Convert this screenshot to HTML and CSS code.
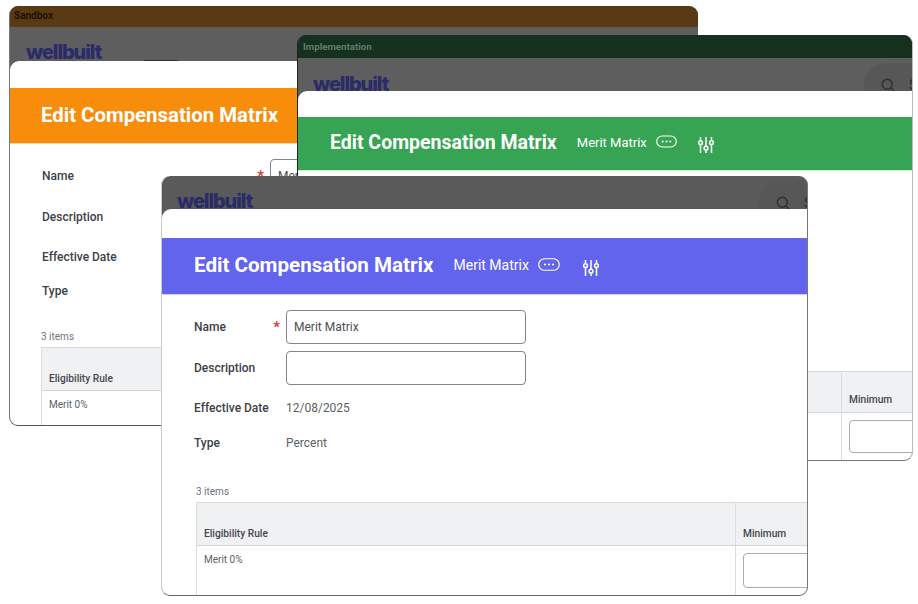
FILE: index.html
```html
<!DOCTYPE html>
<html lang="en">
<head>
  <meta charset="UTF-8">
  <title>Edit Compensation Matrix</title>
  <link rel="stylesheet" href="styles.css">
</head>
<body>

  <svg class="icon-defs" width="0" height="0">
    <symbol id="icon-more" viewBox="0 0 22 13">
      <rect x="0.75" y="0.75" width="20.5" height="11.5" rx="5.75" fill="none" stroke="currentColor" stroke-width="1.2"/>
      <circle cx="7" cy="6.5" r="1.1" fill="currentColor"/>
      <circle cx="11" cy="6.5" r="1.1" fill="currentColor"/>
      <circle cx="15" cy="6.5" r="1.1" fill="currentColor"/>
    </symbol>
    <symbol id="icon-sliders" viewBox="0 0 16 18">
      <g fill="none" stroke="currentColor" stroke-width="1.5">
        <path d="M2.5 1v3.5M2.5 9v8M8 1v9M8 14.5V17M13.5 1v3.5M13.5 9v8"/>
        <circle cx="2.5" cy="6.7" r="1.9"/>
        <circle cx="8" cy="12.2" r="1.9"/>
        <circle cx="13.5" cy="6.7" r="1.9"/>
      </g>
    </symbol>
    <symbol id="icon-search" viewBox="0 0 18 18">
      <circle cx="7.5" cy="7.5" r="6" fill="none" stroke="currentColor" stroke-width="1.6"/>
      <path d="M12 12l5 5" stroke="currentColor" stroke-width="1.6"/>
    </symbol>
  </svg>

  <!-- Sandbox -->
  <section class="window window-sandbox">
    <div class="envbar">Sandbox</div>
    <div class="topbar">
      <span class="logo">wellbuilt</span>
      <span class="topbar-tab"></span>
    </div>
    <div class="dialog">
      <div class="dialog-head">
        <h1>Edit Compensation Matrix</h1>
      </div>
      <div class="form">
        <div class="field">
          <span class="label">Name <i class="required">*</i></span>
          <input class="text-input" type="text" value="Merit Matrix">
        </div>
        <div class="field">
          <span class="label">Description</span>
          <input class="text-input" type="text">
        </div>
        <div class="field field-static">
          <span class="label">Effective Date</span>
          <span class="value">12/08/2025</span>
        </div>
        <div class="field field-static">
          <span class="label">Type</span>
          <span class="value">Percent</span>
        </div>
      </div>
      <div class="items">
        <p class="count">3 items</p>
        <table class="grid">
          <thead>
            <tr><th class="col-rule">Eligibility Rule</th><th class="col-min">Minimum</th></tr>
          </thead>
          <tbody>
            <tr><td>Merit 0%</td><td><input class="cell-input" type="text"></td></tr>
            <tr><td></td><td></td></tr>
          </tbody>
        </table>
      </div>
    </div>
  </section>

  <!-- Implementation -->
  <section class="window window-impl">
    <div class="envbar">Implementation</div>
    <div class="topbar">
      <span class="logo">wellbuilt</span>
      <div class="search">
        <svg class="search-icon"><use href="#icon-search"/></svg>
        <span class="search-text">Search</span>
      </div>
    </div>
    <div class="dialog">
      <div class="dialog-head">
        <h1>Edit Compensation Matrix</h1>
        <span class="subtitle">Merit Matrix</span>
        <svg class="icon-more"><use href="#icon-more"/></svg>
        <svg class="icon-sliders"><use href="#icon-sliders"/></svg>
      </div>
      <div class="form">
        <div class="field">
          <span class="label">Name <i class="required">*</i></span>
          <input class="text-input" type="text" value="Merit Matrix">
        </div>
        <div class="field">
          <span class="label">Description</span>
          <input class="text-input" type="text">
        </div>
        <div class="field field-static">
          <span class="label">Effective Date</span>
          <span class="value">12/08/2025</span>
        </div>
        <div class="field field-static">
          <span class="label">Type</span>
          <span class="value">Percent</span>
        </div>
      </div>
      <div class="items">
        <p class="count">3 items</p>
        <table class="grid">
          <thead>
            <tr><th class="col-rule">Eligibility Rule</th><th class="col-min">Minimum</th></tr>
          </thead>
          <tbody>
            <tr><td>Merit 0%</td><td><input class="cell-input" type="text"></td></tr>
            <tr><td></td><td></td></tr>
          </tbody>
        </table>
      </div>
    </div>
  </section>

  <!-- Production -->
  <section class="window window-prod">
    <div class="topbar">
      <span class="logo">wellbuilt</span>
      <div class="search">
        <svg class="search-icon"><use href="#icon-search"/></svg>
        <span class="search-text">Search</span>
      </div>
    </div>
    <div class="dialog">
      <div class="dialog-head">
        <h1>Edit Compensation Matrix</h1>
        <span class="subtitle">Merit Matrix</span>
        <svg class="icon-more"><use href="#icon-more"/></svg>
        <svg class="icon-sliders"><use href="#icon-sliders"/></svg>
      </div>
      <div class="form">
        <div class="field">
          <span class="label">Name <i class="required">*</i></span>
          <input class="text-input" type="text" value="Merit Matrix">
        </div>
        <div class="field">
          <span class="label">Description</span>
          <input class="text-input" type="text">
        </div>
        <div class="field field-static">
          <span class="label">Effective Date</span>
          <span class="value">12/08/2025</span>
        </div>
        <div class="field field-static">
          <span class="label">Type</span>
          <span class="value">Percent</span>
        </div>
      </div>
      <div class="items">
        <p class="count">3 items</p>
        <table class="grid">
          <thead>
            <tr><th class="col-rule">Eligibility Rule</th><th class="col-min">Minimum</th></tr>
          </thead>
          <tbody>
            <tr><td>Merit 0%</td><td><input class="cell-input" type="text"></td></tr>
            <tr><td></td><td></td></tr>
          </tbody>
        </table>
      </div>
    </div>
  </section>

</body>
</html>
```

FILE: styles.css
```css
html, body {
  margin: 0;
  height: 100%;
  background-color: #fff;
  overflow: hidden;
}

body {
  font-family: Roboto, "Liberation Sans", sans-serif;
  color: #333;
}

.icon-defs {
  position: absolute;
}

/* windows sit on a free canvas and overlap */
.window {
  position: absolute;
  box-sizing: border-box;
  overflow: hidden;
  background-color: #5e5e5e;
  border-radius: 9px;
}

.window-sandbox {
  left: 9px;
  top: 6px;
  width: 689px;
  height: 420px;
  border-bottom: 1px solid #555;
  border-left: 1px solid #777;
}

.window-impl {
  left: 297px;
  top: 35px;
  width: 616px;
  height: 426px;
  border-bottom: 1px solid #777;
  border-right: 1px solid #bbb;
  border-left: 1px solid #222;
}

.window-prod {
  left: 161px;
  top: 176px;
  width: 647px;
  height: 420px;
  background-color: #5a5a5a;
  border-bottom: 1px solid #666;
  border-right: 1px solid #777;
  border-left: 1px solid #ccc;
}

.envbar {
  padding-left: 4px;
  font-weight: 700;
}

.window-sandbox .envbar {
  height: 21px;
  line-height: 19px;
  font-size: 10px;
  background-color: #5a3a14;
  color: #1a1206;
}

.window-impl .envbar {
  height: 23px;
  line-height: 24px;
  padding-left: 5px;
  font-size: 9.7px;
  background-color: #14301f;
  color: #5f7d6b;
}

.topbar {
  display: flex;
  align-items: flex-start;
  overflow: hidden;
  padding-left: 15px;
}

.window-sandbox .topbar { height: 34px; padding-left: 16px; }
.window-impl .topbar { height: 33px; }
.window-prod .topbar { height: 33px; }

.logo {
  margin-top: 13px;
  font-family: Inter, Roboto, sans-serif;
  font-size: 20px;
  font-weight: 800;
  line-height: 24px;
  letter-spacing: -1.1px;
  color: #2b2b68;
}

.window-impl .logo {
  margin-top: 14px;
}

.topbar-tab {
  align-self: flex-end;
  width: 34px;
  height: 1px;
  margin-left: 43px;
  background-color: #333;
}

.search {
  display: flex;
  align-items: center;
  gap: 13px;
  width: 120px;
  height: 44px;
  margin-left: auto;
  margin-top: 5px;
  margin-right: -89px;
  padding-left: 17px;
  background-color: #575757;
  border-radius: 22px;
  color: #2e2e2e;
  flex-shrink: 0;
}

.search-icon {
  width: 15px;
  height: 15px;
  flex-shrink: 0;
}

.search-text {
  font-size: 14px;
}

.dialog {
  height: 100%;
  padding-top: 27px;
  background-color: #fff;
  border-radius: 9px 0 0 0;
}

.window-impl .dialog { padding-top: 26px; }
.window-prod .dialog { padding-top: 29px; }

.dialog-head {
  display: flex;
  align-items: center;
  box-sizing: border-box;
  height: 56px;
  padding: 0 0 2px 32px;
  color: #fff;
}

.window-sandbox .dialog-head {
  padding-left: 31px;
  background-color: #f78d0b;
  border-bottom: 1px solid #fbd9ae;
}

.window-impl .dialog-head {
  height: 54px;
  background-color: #36a452;
  border-bottom: 1px solid #c9ecd3;
}

.window-prod .dialog-head {
  height: 57px;
  background-color: #6264ee;
  border-bottom: 1px solid #cfd0fa;
}

h1 {
  margin: 0 20px 0 0;
  font-size: 20.6px;
  font-weight: 700;
  white-space: nowrap;
}

.window-sandbox h1 {
  font-size: 20.4px;
}

.window-impl h1 {
  font-size: 19.5px;
}

.subtitle {
  font-size: 14px;
  margin-right: 9px;
  white-space: nowrap;
}

.window-impl .subtitle {
  font-size: 13px;
}

.icon-more {
  width: 22px;
  height: 13px;
  margin-top: -2px;
  margin-right: 23px;
}

.window-impl .icon-more {
  width: 21px;
  margin-right: 21px;
}

.icon-sliders {
  width: 16px;
  height: 18px;
  margin-top: 5px;
}

.form {
  padding: 15px 0 0 32px;
}

.field {
  display: flex;
  align-items: center;
  height: 34px;
  margin-bottom: 7px;
}

.field-static {
  height: 20px;
  margin-top: 13px;
  margin-bottom: 0;
}

.field-static + .field-static {
  margin-top: 14px;
}

.window-prod .field-static + .field-static {
  margin-top: 15px;
}

.window-prod .count {
  margin-top: 33px;
}

.label {
  display: flex;
  justify-content: space-between;
  flex-shrink: 0;
  box-sizing: border-box;
  width: 92px;
  padding-right: 6px;
  font-size: 12px;
  font-weight: 500;
  color: #3d4148;
}

.window-sandbox .label,
.window-impl .label {
  width: 228px;
}

.required {
  font-style: normal;
  font-size: 15px;
  line-height: 14px;
  color: #d9302a;
}

.text-input {
  box-sizing: border-box;
  width: 240px;
  height: 34px;
  padding: 0 7px;
  border: 1px solid #80858c;
  border-radius: 4px;
  font-family: inherit;
  font-size: 12px;
  color: #4a4e55;
  background-color: #fff;
}

.value {
  font-size: 12px;
  color: #5b5f66;
}

.items {
  padding-left: 34px;
}

.window-sandbox .items { padding-left: 31px; }

.count {
  height: 11px;
  margin: 34px 0 5px;
  font-size: 10px;
  line-height: 11px;
  color: #70747a;
}

.window-sandbox .count {
  margin-top: 30px;
}

.window-impl .count {
  margin-top: 27px;
}

.grid {
  border-collapse: collapse;
  table-layout: fixed;
  width: 680px;
  border-left: 1px solid #ddd;
  border-top: 1px solid #d8d9db;
}

.window-impl .grid {
  width: 650px;
}

.grid th {
  box-sizing: border-box;
  height: 43px;
  padding: 0 8px 6px 7px;
  vertical-align: bottom;
  text-align: left;
  font-size: 10.2px;
  font-weight: 500;
  color: #44484e;
  background-color: #f0f1f2;
  border-bottom: 1px solid #d5d6d8;
}

.window-impl .grid th {
  height: 41px;
  padding-bottom: 7px;
}

.grid td {
  box-sizing: border-box;
  height: 46px;
  padding: 8px 7px;
  vertical-align: top;
  font-size: 10px;
  color: #5b5f66;
  border-bottom: 1px solid #dcdddf;
}

.col-rule {
  width: 539px;
}

.window-impl .col-rule {
  width: 509px;
}

.col-min {
  width: 141px;
  border-left: 1px solid #dcdddf;
}

.grid td + td {
  border-left: 1px solid #dcdddf;
  padding-top: 7px;
}

.cell-input {
  display: block;
  box-sizing: border-box;
  width: 110px;
  height: 35px;
  border: 1px solid #a8abb0;
  border-radius: 4px;
  background-color: #fff;
}

.window-impl .cell-input {
  height: 33px;
}
```
